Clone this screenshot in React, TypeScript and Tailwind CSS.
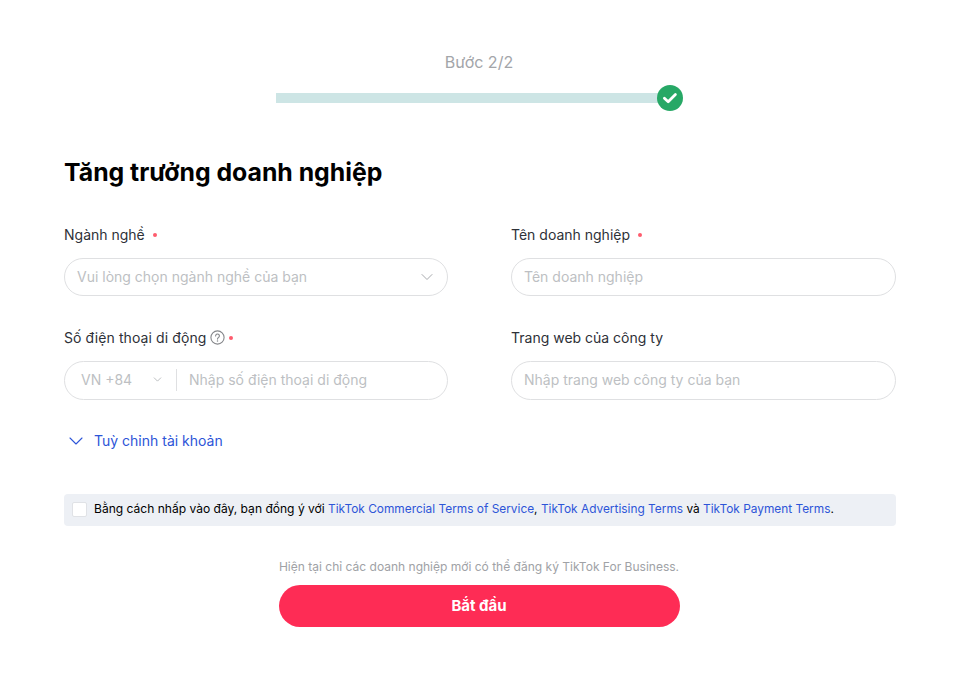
import { ChevronDown } from 'lucide-react';
import type { ReactNode } from 'react';

const Required = () => <span className="ml-[8px] inline-block size-[4px] rounded-full bg-[#fe5c6d]" />;

const Field = ({ label, children, height = 'h-[38px]', textOffset = 'pb-px' }: { label: ReactNode; children: ReactNode; height?: string; textOffset?: string }) => (
  <div className="flex flex-col">
    <div className="flex h-[20px] items-center pb-px text-[14px] text-[#2e3138]">{label}</div>
    <div className={`mt-[13px] flex ${height} ${textOffset} items-center rounded-full border border-[#dfe0e2] bg-white pl-[12px] pr-[10px] text-[14px] text-[#bdbfc3]`}>
      {children}
    </div>
  </div>
);

export default function App() {
  return (
    <div className="flex h-[678px] w-[958px] flex-col overflow-hidden bg-white pl-[64px] pr-[62px] font-['Inter',sans-serif]">
      <div className="flex flex-col items-center pr-[2px] pt-[52px]">
        <div className="h-[20px] text-[16px] leading-[20px] text-[#a3a5a9]">Bước 2/2</div>
        <div className="mt-[13px] flex h-[26px] w-[407px] items-center">
          <div className="h-[10px] flex-1 bg-[#cde5e5]" />
          <div className="-ml-[13px] flex size-[26px] items-center justify-center rounded-full bg-[#27a866]">
            <svg width="16" height="16" viewBox="0 0 16 16" fill="none">
              <path d="M2.4 8.2 6.2 11.8 13.4 4.6" stroke="#fff" strokeWidth="2.8" strokeLinecap="round" strokeLinejoin="round" />
            </svg>
          </div>
        </div>
      </div>

      <h1 className="mt-[44px] h-[34px] text-[24.8px] font-bold leading-[34px] text-[#000]">
        Tăng trưởng doanh nghiệp
      </h1>

      <div className="mt-[36px] grid grid-cols-[384px_385px] gap-x-[63px] gap-y-[32px]">
        <Field label={<>Ngành nghề<Required /></>}>
          <span className="flex-1">Vui lòng chọn ngành nghề của bạn</span>
          <ChevronDown size={18} strokeWidth={1.2} className="size-[20px] text-[#a8aaae]" />
        </Field>
        <Field label={<>Tên doanh nghiệp<Required /></>}>
          <span>Tên doanh nghiệp</span>
        </Field>
        <Field
          height="h-[39px]"
          textOffset="pb-[2px]"
          label={
            <>
              <span className="tracking-[0.1px]">Số điện thoại di động</span>
              <svg className="ml-[3px]" width="15" height="15" viewBox="0 0 15 15" fill="none">
                <circle cx="7.5" cy="7.5" r="6.6" stroke="#85878b" strokeWidth="1.1" />
                <path d="M5.6 5.9a1.9 1.9 0 1 1 2.9 1.6c-.7.4-1 .7-1 1.6" stroke="#85878b" strokeWidth="1.1" strokeLinecap="round" />
                <circle cx="7.5" cy="11" r=".75" fill="#85878b" />
              </svg>
              <span className="ml-[4px] inline-block size-[4px] rounded-full bg-[#fe5c6d]" />
            </>
          }
        >
          <span className="ml-[4px] w-[53px]">VN +84</span>
          <ChevronDown size={13} strokeWidth={1.4} className="ml-[17px] text-[#a8aaae]" />
          <div className="ml-[12px] h-[22px] w-px bg-[#dfe0e2]" />
          <span className="ml-[12px]">Nhập số điện thoại di động</span>
        </Field>
        <Field height="h-[39px]" textOffset="pb-[2px]" label="Trang web của công ty">
          <span>Nhập trang web công ty của bạn</span>
        </Field>
      </div>

      <div className="mt-[31px] flex h-[20px] items-center pb-px text-[14px] text-[#2d55d8]">
        <ChevronDown size={24} strokeWidth={1.1} className="mr-[6px] size-[24px] text-[#2d55d8]" />
        Tuỳ chỉnh tài khoản
      </div>

      <div className="mt-[43px] flex h-[32px] items-center rounded-[4px] bg-[#edf0f5] pb-[2px] pl-[8px] text-[11.88px] text-[#000]">
        <span className="mt-[1px] size-[15px] rounded-[2px] border border-[#e0e2e6] bg-white" />
        <p className="ml-[7px]">
          <span className="text-[12.05px]">Bằng cách nhấp vào đây, bạn đồng ý với</span> <a className="text-[#2d55d8]">TikTok Commercial Terms of Service</a>,{' '}
          <a className="text-[#2d55d8]">TikTok Advertising Terms</a> và <a className="text-[#2d55d8]">TikTok Payment Terms</a>.
        </p>
      </div>

      <div className="mt-[32px] flex flex-col items-center pr-[2px]">
        <p className="h-[17px] text-[12.03px] leading-[17px] text-[#a0a2a6]">
          Hiện tại chỉ các doanh nghiệp mới có thể đăng ký TikTok For Business.
        </p>
        <button className="mt-[10px] h-[42px] w-[401px] rounded-full bg-[#fe2c55] text-[15px] font-bold text-white">Bắt đầu</button>
      </div>
    </div>
  );
}
